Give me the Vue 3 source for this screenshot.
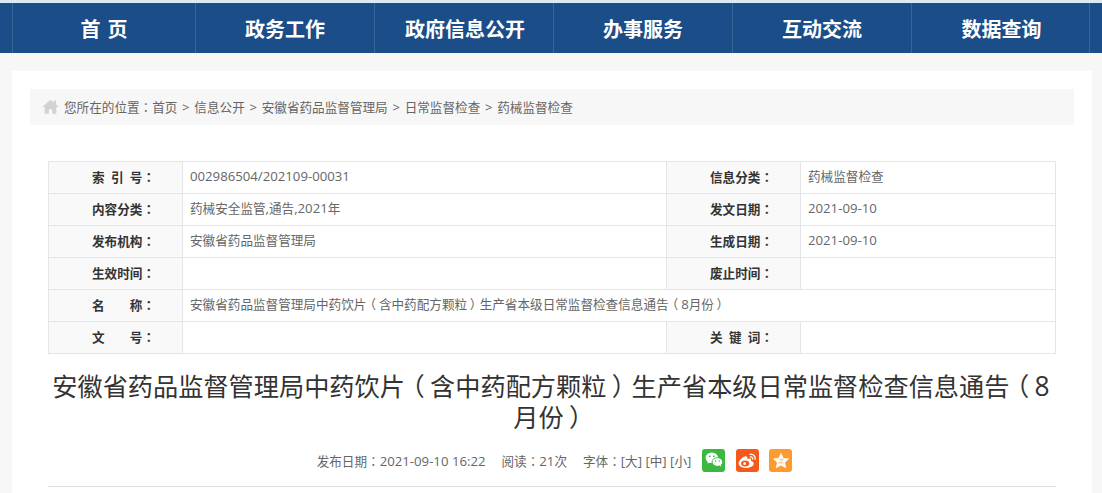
<template>
  <div class="page">
    <div class="top-strip"></div>
    <nav class="nav">
      <a v-for="item in navItems" :key="item" class="nav-item">{{ item }}</a>
    </nav>
    <main class="card">
      <div class="crumbs">
        <svg class="home" width="17" height="15" viewBox="0 0 18 16"><path fill="#d2d2d2" d="M9 .8 0 8.400h2.800V15.600h4.400v-4.800h3.600v4.800h4.400V8.400H18L15 5.900V1.600h-2.400v2.300z"/></svg>
        <span><Rich text="您所在的位置：首页 > 信息公开 > 安徽省药品监督管理局 > 日常监督检查 > 药械监督检查" /></span>
      </div>
      <div class="meta">
        <template v-for="row in metaRows" :key="row.label">
          <div class="cell head"><Rich :text="row.label" /></div>
          <div class="cell" :class="{ span3: row.full }"><Rich :text="row.value" /></div>
          <template v-if="!row.full">
            <div class="cell head"><Rich :text="row.label2" /></div>
            <div class="cell"><Rich :text="row.value2" /></div>
          </template>
        </template>
      </div>
      <h1 class="title"><Rich text="安徽省药品监督管理局中药饮片（含中药配方颗粒）生产省本级日常监督检查信息通告（8月份）" /></h1>
      <div class="info">
        <span><Rich text="发布日期：2021-09-10 16:22" /></span>
        <span><Rich text="阅读：21次" /></span>
        <span><Rich text="字体：[大] [中] [小]" /></span>
        <div class="share">
          <span class="badge wechat">
            <svg width="18" height="16" viewBox="0 0 18 16"><ellipse cx="6.800" cy="5.800" rx="6.300" ry="5.200" fill="#fff"/><path fill="#fff" d="M3 9l-.6 2.600L5.400 10z"/><ellipse cx="12.400" cy="10" rx="5.300" ry="4.300" fill="#fff" stroke="#3bb83f" stroke-width=".9"/><path fill="#fff" d="M14.800 13l1.400 2-.2-2.600z"/><circle cx="4.700" cy="4.300" r=".9" fill="#3bb83f"/><circle cx="8.800" cy="4.300" r=".9" fill="#3bb83f"/><circle cx="10.600" cy="9" r=".7" fill="#3bb83f"/><circle cx="14.200" cy="9" r=".7" fill="#3bb83f"/></svg>
          </span>
          <span class="badge weibo">
            <svg width="19" height="17" viewBox="0 0 18 16"><path fill="#fff" d="M7.200 15C3.600 15 .6 13.300.6 10.700.6 8.300 4.800 3.900 7.300 3.900c1.500 0 1.900 1.300 1.500 2.800 2-.8 3.700-.7 3.700.8 0 .4-.1.700-.2 1 1.500.4 2.600 1.200 2.600 2.500 0 2.400-3.700 4-7.700 4z"/><ellipse cx="6.800" cy="10.800" rx="3.900" ry="2.800" fill="#f7591b"/><circle cx="6.300" cy="11" r="1.300" fill="#fff"/><path fill="none" stroke="#fff" stroke-width="1.200" stroke-linecap="round" d="M11.500 2.100c2.900-.5 5.300 2 4.700 4.900M11.800 4.500c1.300-.2 2.300.9 2.100 2.200"/></svg>
          </span>
          <span class="badge star">
            <svg width="18" height="17" viewBox="0 0 18 17"><path fill="#fff" d="M9 .6l2.500 5.300 5.800.7-4.300 4 1.200 5.700L9 13.500l-5.200 2.800L5 10.600.7 6.600l5.800-.7z"/><path fill="none" stroke="#ffc98f" stroke-width="1.100" d="M6.800 7.300h4.400L7 10.900h4.400"/></svg>
          </span>
        </div>
      </div>
      <div class="rule"></div>
    </main>
  </div>
</template>

<script setup>
import { h } from 'vue'

const navItems = ['首 页', '政务工作', '政府信息公开', '办事服务', '互动交流', '数据查询']

const metaRows = [
  { label: '索\u2002引\u2002号：', value: '002986504/202109-00031', label2: '信息分类：', value2: '药械监督检查' },
  { label: '内容分类：', value: '药械安全监管,通告,2021年', label2: '发文日期：', value2: '2021-09-10' },
  { label: '发布机构：', value: '安徽省药品监督管理局', label2: '生成日期：', value2: '2021-09-10' },
  { label: '生效时间：', value: '', label2: '废止时间：', value2: '' },
  { label: '名　　称：', full: true, value: '安徽省药品监督管理局中药饮片（含中药配方颗粒）生产省本级日常监督检查信息通告（8月份）' },
  { label: '文　　号：', value: '', label2: '关\u2002键\u2002词：', value2: '' }
]

// latin runs sit a bit larger than the CJK text, full-width punctuation is centred
const Rich = props =>
  props.text.split(/([0-9:/\-[\]>, ]+|[（）：])/).filter(Boolean).map(run => {
    if (run === '：') return h('span', { class: 'pun' }, run)
    if (run === '（' || run === '）') return h('span', { class: 'paren' }, run)
    if (/^[0-9:/\-[\]>, ]+$/.test(run)) return h('span', { class: 'num' }, run)
    return run
  })
Rich.props = ['text']
</script>

<style>
html, body {
  margin: 0;
  background: #f7f7f7;
  overflow: hidden;
}
.num {
  font-size: 1.047em;
}
.pun {
  font-family: "Noto Sans CJK TC", sans-serif;
}
.paren {
  display: inline-block;
  width: 1em;
  text-align: center;
  font-feature-settings: "palt";
}
</style>

<style scoped>
.page {
  height: 493px;
  overflow: hidden;
  font-family: "Open Sans", "Noto Sans CJK SC", sans-serif;
}
.top-strip {
  height: 3px;
  background: #dbe8f5;
}
.nav {
  height: 50px;
  background: #1b4d89;
  display: grid;
  grid-template-columns: 183px repeat(5, 179px);
  padding-left: 12px;
}
.nav-item {
  display: flex;
  align-items: center;
  justify-content: center;
  color: #fff;
  font-size: 20px;
  font-weight: 700;
  word-spacing: 2px;
  border-left: 1px solid #3a6598;
  box-sizing: border-box;
}
.nav-item:nth-child(3),
.nav-item:nth-child(6) {
  padding-left: 2px;
}
.nav-item:last-child {
  border-right: 1px solid #3a6598;
}
.card {
  width: 1080px;
  margin: 18px 0 0 12px;
  padding: 18px;
  box-sizing: border-box;
  height: 500px;
  background: #fff;
}
.crumbs {
  height: 36px;
  background: #f7f7f7;
  display: flex;
  align-items: center;
  padding: 0 0 2px 12px;
  box-sizing: border-box;
  gap: 5px;
  font-size: 12.6px;
  word-spacing: 1.3px;
  color: #666;
}
.home {
  flex: none;
}
.meta {
  margin: 36px 18px 0;
  display: grid;
  grid-template-columns: 134px 484px 134px 255px;
  grid-auto-rows: 32px;
  border-top: 1px solid #e5e5e5;
  border-left: 1px solid #e5e5e5;
  font-size: 12.6px;
  color: #666;
}
.cell {
  border-right: 1px solid #e5e5e5;
  border-bottom: 1px solid #e5e5e5;
  line-height: 29px;
  padding-left: 7px;
  box-sizing: border-box;
  white-space: pre;
}
.head {
  background: #f9f9f9;
  color: #333;
  font-weight: 700;
  padding-left: 43px;
}
.span3 {
  grid-column: span 3;
}
.title {
  margin: 17px 20px 0 18px;
  font-size: 25.2px;
  line-height: 31px;
  font-weight: 400;
  color: #333;
  text-align: center;
}
.info {
  margin-top: 14px;
  padding-left: 5px;
  display: flex;
  justify-content: center;
  align-items: center;
  gap: 16px;
  font-size: 12.6px;
  color: #666;
  height: 26px;
}
.share {
  display: flex;
  gap: 10.5px;
  margin-left: -5px;
}
.badge {
  width: 23px;
  height: 23px;
  border-radius: 3px;
  display: flex;
  align-items: center;
  justify-content: center;
}
.wechat {
  background: #3bb83f;
}
.weibo {
  background: #f7591b;
}
.star {
  background: #ff9a2e;
}
.rule {
  margin: 13px 18px 0;
  border-top: 1px solid #ddd;
}
</style>
